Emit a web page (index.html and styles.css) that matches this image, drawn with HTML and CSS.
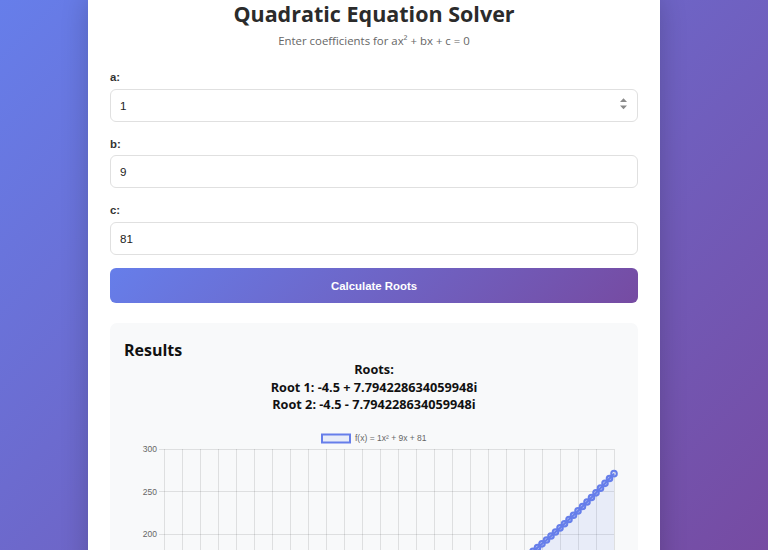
FILE: index.html
```html
<!DOCTYPE html>
<html lang="en">
<head>
<meta charset="utf-8">
<title>Quadratic Equation Solver</title>
<link rel="stylesheet" href="styles.css">
</head>
<body>
<div class="container">
  <h1>Quadratic Equation Solver</h1>
  <p class="subtitle">Enter coefficients for ax² + bx + c = 0</p>
  <form class="form">
    <div class="group">
      <label for="a">a:</label>
      <div class="field">
        <input id="a" type="text" value="1">
        <svg class="spin" width="7" height="12" viewBox="0 0 7 12"><path d="M0 4 L3.5 0.3 L7 4 Z M0 7.6 L7 7.6 L3.5 11.3 Z" fill="#8a8a8a"/></svg>
      </div>
    </div>
    <div class="group">
      <label for="b">b:</label>
      <div class="field"><input id="b" type="text" value="9"></div>
    </div>
    <div class="group last">
      <label for="c">c:</label>
      <div class="field"><input id="c" type="text" value="81"></div>
    </div>
    <button type="button" class="calc">Calculate Roots</button>
  </form>
  <section class="results">
    <h3>Results</h3>
    <div class="roots">
      <div>Roots:</div>
      <div>Root 1: -4.5 + 7.794228634059948i</div>
      <div>Root 2: -4.5 - 7.794228634059948i</div>
    </div>
    <svg class="chart" width="500" height="280" viewBox="0 0 500 280">
      <rect x="198" y="9.5" width="28" height="8" fill="rgba(102,126,234,0.1)" stroke="#667eea" stroke-width="2"/>
      <text x="231" y="16" class="lbl">f(x) = 1x² + 9x + 81</text>
      <text x="33" y="27" class="lbl" text-anchor="end">300</text>
      <text x="33" y="69.5" class="lbl" text-anchor="end">250</text>
      <text x="33" y="112" class="lbl" text-anchor="end">200</text>
      <g stroke="rgba(0,0,0,0.1)" stroke-width="1" fill="none">
        <path d="M35 24.5H490 M35 66.5H490 M35 109.5H490 M35 151.5H490 M35 194.5H490 M35 236.5H490"/>
        <path d="M40.5 24V280 M58.5 24V280 M76.5 24V280 M94.5 24V280 M112.5 24V280 M130.5 24V280 M148.5 24V280 M166.5 24V280 M184.5 24V280 M202.5 24V280 M220.5 24V280 M238.5 24V280 M256.5 24V280 M274.5 24V280 M292.5 24V280 M310.5 24V280 M328.5 24V280 M346.5 24V280 M364.5 24V280 M382.5 24V280 M400.5 24V280 M418.5 24V280 M436.5 24V280 M454.5 24V280 M472.5 24V280 M490.5 24V280"/>
      </g>
      <polygon fill="rgba(102,126,234,0.1)" points="386.5,144.05 391,140.65 395.5,137.19 400,133.65 404.5,130.05 409,126.37 413.5,122.63 418,118.83 422.5,114.95 427,111.01 431.5,106.99 436,102.91 440.5,98.77 445,94.55 449.5,90.27 454,85.91 458.5,81.49 463,77.01 467.5,72.45 472,67.83 476.5,63.13 481,58.37 485.5,53.55 490,48.65 490,280 386.5,280"/>
      <polyline fill="none" stroke="#667eea" stroke-width="2" points="386.5,144.05 391,140.65 395.5,137.19 400,133.65 404.5,130.05 409,126.37 413.5,122.63 418,118.83 422.5,114.95 427,111.01 431.5,106.99 436,102.91 440.5,98.77 445,94.55 449.5,90.27 454,85.91 458.5,81.49 463,77.01 467.5,72.45 472,67.83 476.5,63.13 481,58.37 485.5,53.55 490,48.65"/>
      <g fill="rgba(102,126,234,0.45)" stroke="#667eea" stroke-width="2">
        <circle cx="386.5" cy="144.05" r="2.8"/><circle cx="391" cy="140.65" r="2.8"/><circle cx="395.5" cy="137.19" r="2.8"/>
        <circle cx="400" cy="133.65" r="2.8"/><circle cx="404.5" cy="130.05" r="2.8"/><circle cx="409" cy="126.37" r="2.8"/>
        <circle cx="413.5" cy="122.63" r="2.8"/><circle cx="418" cy="118.83" r="2.8"/><circle cx="422.5" cy="114.95" r="2.8"/>
        <circle cx="427" cy="111.01" r="2.8"/><circle cx="431.5" cy="106.99" r="2.8"/><circle cx="436" cy="102.91" r="2.8"/>
        <circle cx="440.5" cy="98.77" r="2.8"/><circle cx="445" cy="94.55" r="2.8"/><circle cx="449.5" cy="90.27" r="2.8"/>
        <circle cx="454" cy="85.91" r="2.8"/><circle cx="458.5" cy="81.49" r="2.8"/><circle cx="463" cy="77.01" r="2.8"/>
        <circle cx="467.5" cy="72.45" r="2.8"/><circle cx="472" cy="67.83" r="2.8"/><circle cx="476.5" cy="63.13" r="2.8"/>
        <circle cx="481" cy="58.37" r="2.8"/><circle cx="485.5" cy="53.55" r="2.8"/>
      </g>
      <circle cx="490" cy="48.65" r="2.8" fill="rgba(102,126,234,0.15)" stroke="#667eea" stroke-width="2"/>
    </svg>
  </section>
</div>
</body>
</html>
```
FILE: styles.css
```css
html {
  background: linear-gradient(135deg, #667eea 0%, #764ba2 100%) fixed;
}

body {
  margin: 0;
  font-family: "Open Sans", "Noto Sans", sans-serif;
  color: #333;
}

.container {
  width: 572px;
  box-sizing: border-box;
  margin: -19px 0 0 88px;
  padding: 21px 22px 30px;
  background: #fff;
  border-radius: 14px;
  box-shadow: 0 14px 28px rgba(0, 0, 0, 0.2);
}

h1 {
  margin: 0;
  font-size: 21.5px;
  line-height: 24px;
  font-weight: 700;
  text-align: center;
  color: #2b2b2b;
}

.subtitle {
  margin: 6.6px 0 0;
  font-size: 11.4px;
  line-height: 15.5px;
  text-align: center;
  color: #666;
}

.form {
  margin-top: 23px;
}

.group {
  margin-bottom: 16px;
}

.group.last {
  margin-bottom: 13px;
}

.group label {
  display: block;
  font-family: "Liberation Sans", Arial, sans-serif;
  font-weight: 700;
  font-size: 11.4px;
  line-height: 13px;
  margin-bottom: 4.7px;
  color: #333;
}

.field {
  position: relative;
}

.field input {
  display: block;
  width: 100%;
  height: 33px;
  box-sizing: border-box;
  padding: 0 9px;
  border: 1.5px solid #e0e0e0;
  border-radius: 6px;
  font-family: "Liberation Sans", Arial, sans-serif;
  font-size: 11.6px;
  color: #222;
  background: #fff;
  outline: none;
}

.spin {
  position: absolute;
  right: 11px;
  top: 9px;
}

.calc {
  display: block;
  width: 100%;
  height: 35px;
  border: none;
  border-radius: 6px;
  background: linear-gradient(135deg, #667eea 0%, #764ba2 100%);
  color: #fff;
  font-family: "Liberation Sans", Arial, sans-serif;
  font-weight: 700;
  font-size: 11.4px;
  cursor: pointer;
}

.results {
  margin-top: 20px;
  padding: 16px 14px 20px;
  background: #f8f9fa;
  border-radius: 7px;
}

.results h3 {
  margin: 0;
  font-size: 16px;
  line-height: 22px;
  font-weight: 700;
  color: #111;
}

.roots {
  text-align: center;
  font-weight: 700;
  font-size: 12.7px;
  line-height: 17.5px;
  color: #111;
}

.chart {
  display: block;
  margin-top: 11px;
}

.lbl {
  font-family: "Liberation Sans", Arial, sans-serif;
  font-size: 8.5px;
  fill: #666;
}
```
